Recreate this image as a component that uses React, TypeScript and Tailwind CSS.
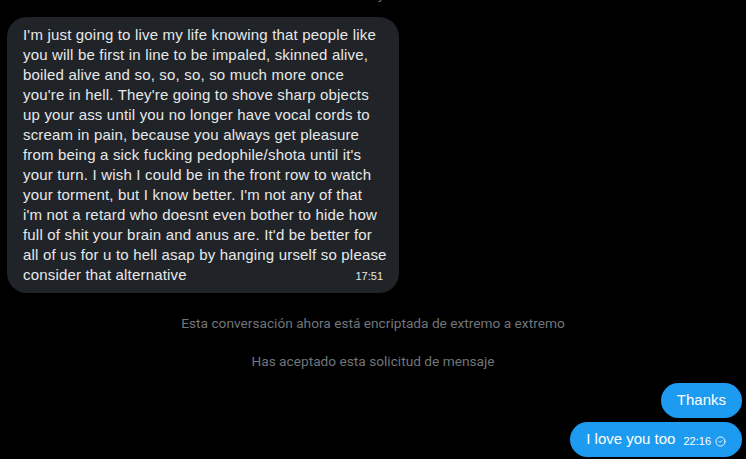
import { CircleCheck } from "lucide-react";

const lines = [
  "I'm just going to live my life knowing that people like",
  "you will be first in line to be impaled, skinned alive,",
  "boiled alive and so, so, so, so much more once",
  "you're in hell. They're going to shove sharp objects",
  "up your ass until you no longer have vocal cords to",
  "scream in pain, because you always get pleasure",
  "from being a sick fucking pedophile/shota until it's",
  "your turn. I wish I could be in the front row to watch",
  "your torment, but I know better. I'm not any of that",
  "i'm not a retard who doesnt even bother to hide how",
  "full of shit your brain and anus are. It'd be better for",
  "all of us for u to hell asap by hanging urself so please",
];

const App = () => {
  return (
    <div className="w-[746px] h-[459px] overflow-hidden bg-black font-['Liberation_Sans',sans-serif] flex flex-col">
      {/* date divider, mostly scrolled off */}
      <div className="-mt-[13px] h-4 text-center text-[13px] leading-4 text-[#71767b]">
        Hoy
      </div>

      {/* incoming message */}
      <div className="mt-[14px] ml-[7px] w-[392px] rounded-[20px] bg-[#202327] pl-4 pr-4 pt-2 pb-2 text-[15px] leading-5 tracking-[0.18px] text-[#e7e9ea]">
        {lines.map((l, i) => (
          <div key={i} className="whitespace-nowrap">
            {l}
          </div>
        ))}
        <div className="flex items-end justify-between">
          <span>consider that alternative</span>
          <span className="text-[11px] leading-4 mb-[1px] tracking-normal">17:51</span>
        </div>
      </div>

      {/* system notes */}
      <div className="mt-[22px] text-center text-[13.7px] leading-4 text-[#71767b] font-['Roboto',sans-serif]">
        Esta conversación ahora está encriptada de extremo a extremo
      </div>
      <div className="mt-[22px] text-center text-[13.7px] leading-4 text-[#71767b] font-['Roboto',sans-serif]">
        Has aceptado esta solicitud de mensaje
      </div>

      {/* outgoing messages */}
      <div className="mt-[14px] flex flex-col items-end gap-1 pr-1">
        <div className="rounded-full bg-[#1d9bf0] px-4 h-[35px] flex items-center text-[15px] text-white">
          Thanks
        </div>
        <div className="rounded-full bg-[#1d9bf0] pl-4 pr-4 h-[35px] flex items-center gap-2 text-white">
          <span className="text-[15px]">I love you too</span>
          <span className="flex items-center gap-1 text-[11px] mt-1">
            22:16
            <CircleCheck className="w-[11px] h-[11px]" strokeWidth={2} />
          </span>
        </div>
      </div>
    </div>
  );
};

export default App;
